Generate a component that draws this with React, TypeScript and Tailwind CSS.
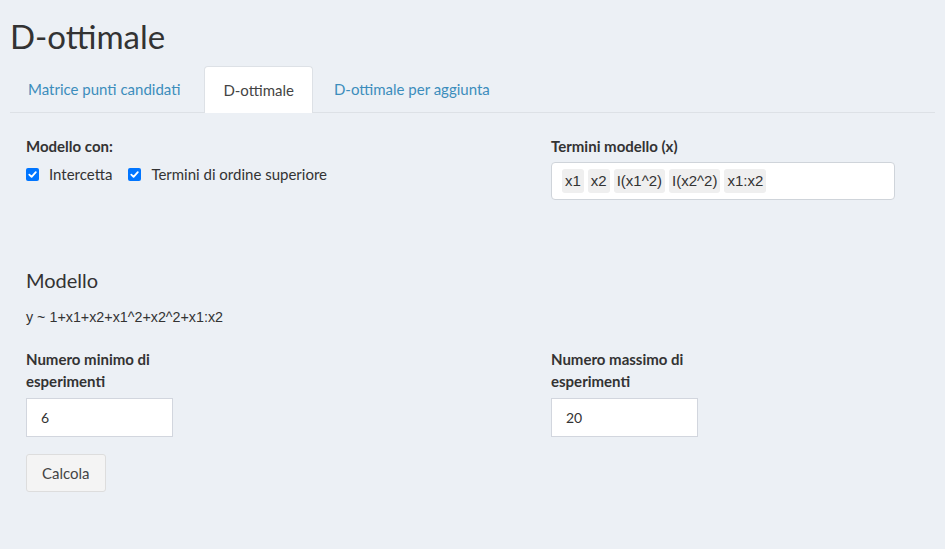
import React from "react";

const font = { fontFamily: '"Lato", "Noto Sans", sans-serif' };

function Check({ label }: { label: string }) {
  return (
    <label className="flex items-center">
      <span className="w-[13px] h-[13px] rounded-[2px] bg-[#0075ff] flex items-center justify-center">
        <svg width="11" height="11" viewBox="0 0 12 12">
          <path d="M2.5 6.2 L5 8.6 L9.6 3.4" stroke="white" strokeWidth="2" fill="none" strokeLinecap="round" strokeLinejoin="round" />
        </svg>
      </span>
      <span className="ml-[10px] text-[15px] text-[#333]">{label}</span>
    </label>
  );
}

function Tag({ t }: { t: string }) {
  return (
    <span
      className="bg-[#efefef] rounded-[3px] px-[3px] h-[24px] flex items-center text-[15px] text-[#333]"
      style={{ fontFamily: '"Liberation Sans", Arial, sans-serif' }}
    >
      {t}
    </span>
  );
}

export default function App() {
  return (
    <div className="min-h-[549px] bg-[#ecf0f5] text-[#333]" style={font}>
      <div className="px-[10px]">
        <h1 className="text-[33px] leading-[40px] pt-[16px] pb-[10px] font-normal text-[#333]">D-ottimale</h1>
        <div className="flex border-b border-[#dde1e6] h-[47px]">
          <div className="pl-[18px] pr-[19px] mr-[5px] flex items-center text-[15px] text-[#3c8dbc]">Matrice punti candidati</div>
          <div className="px-[18px] mr-[3px] flex items-center text-[15px] text-[#444] bg-white rounded-t-[4px] border border-[#dde1e6] border-b-0 -mb-px">D-ottimale</div>
          <div className="px-[18px] flex items-center text-[15px] text-[#3c8dbc]">D-ottimale per aggiunta</div>
        </div>
      </div>

      <div className="pl-[26px] pt-[22px]">
        <div className="flex">
          <div className="w-[525px]">
            <div className="text-[15px] font-bold leading-[22px]">Modello con:</div>
            <div className="flex gap-[16px] mt-[6px]">
              <Check label="Intercetta" />
              <Check label="Termini di ordine superiore" />
            </div>
          </div>
          <div>
            <div className="text-[15px] font-bold leading-[22px]">Termini modello (x)</div>
            <div className="mt-[5px] w-[344px] h-[38px] bg-white border border-[#cfd4da] rounded-[4px] flex items-center gap-[4px] px-[10px]">
              <Tag t="x1" />
              <Tag t="x2" />
              <Tag t="I(x1^2)" />
              <Tag t="I(x2^2)" />
              <Tag t="x1:x2" />
            </div>
          </div>
        </div>

        <div className="mt-[67px] text-[20px] leading-[26px] text-[#333]">Modello</div>
        <div
          className="mt-[14px] text-[14.3px] leading-[20px]"
          style={{ fontFamily: '"Liberation Sans", Arial, sans-serif' }}
        >
          y ~ 1+x1+x2+x1^2+x2^2+x1:x2
        </div>

        <div className="flex mt-[21px]">
          <div className="w-[525px]">
            <div className="text-[15px] font-bold leading-[22px] w-[150px]">Numero minimo di esperimenti</div>
            <div className="mt-[6px] w-[147px] h-[39px] bg-white border border-[#d2d6de] flex items-center px-[14px] text-[14px]">6</div>
            <button className="mt-[17px] h-[38px] px-[15px] bg-[#f4f4f4] border border-[#ddd] rounded-[3px] text-[15px] text-[#444]">Calcola</button>
          </div>
          <div>
            <div className="text-[15px] font-bold leading-[22px] w-[150px]">Numero massimo di esperimenti</div>
            <div className="mt-[6px] w-[147px] h-[39px] bg-white border border-[#d2d6de] flex items-center px-[14px] text-[14px]">20</div>
          </div>
        </div>
      </div>
    </div>
  );
}
